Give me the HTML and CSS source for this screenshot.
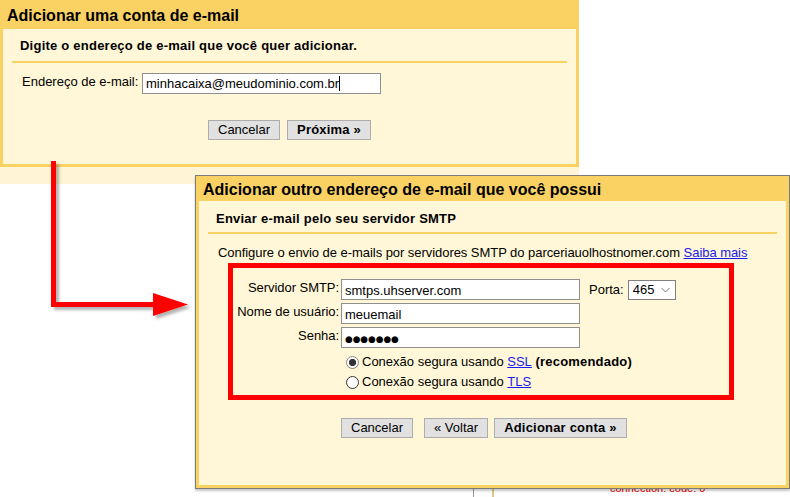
FILE: index.html
```html
<!DOCTYPE html>
<html lang="pt-BR">
<head>
<meta charset="utf-8">
<title>Adicionar conta de e-mail</title>
<link rel="stylesheet" href="styles.css">
</head>
<body>
<div class="desk">
  <div class="bg-bits">
    <span class="bg-line"></span>
    <span class="bg-err">connection: code: 0</span>
  </div>

  <section class="win win1">
    <h1 class="win-title">Adicionar uma conta de e-mail</h1>
    <div class="win-body">
      <h2 class="sub">Digite o endereço de e-mail que você quer adicionar.</h2>
      <div class="row1">
        <span class="lbl1">Endereço de e-mail:</span>
        <div class="field f1">minhacaixa@meudominio.com.br<span class="caret"></span></div>
      </div>
      <div class="btns btns1">
        <button class="btn" type="button">Cancelar</button>
        <button class="btn b" type="button">Próxima »</button>
      </div>
    </div>
    <div class="win1-strip"></div>
  </section>

  <section class="win win2">
    <h1 class="win-title">Adicionar outro endereço de e-mail que você possui</h1>
    <div class="win-body">
      <h2 class="sub">Enviar e-mail pelo seu servidor SMTP</h2>
      <p class="intro">Configure o envio de e-mails por servidores SMTP do parceriauolhostnomer.com <a href="#" class="lnk">Saiba mais</a></p>
      <div class="redbox">
        <div class="form">
          <label class="lbl" for="smtp">Servidor SMTP:</label>
          <input id="smtp" class="field f2" type="text" value="smtps.uhserver.com">
          <div class="porta">
            <span class="porta-lbl">Porta:</span>
            <span class="select">465<svg class="chev" width="9" height="6" viewBox="0 0 9 6"><polyline points="0.5,1 4.5,5 8.5,1" fill="none" stroke="#7a7a7a" stroke-width="1"/></svg></span>
          </div>

          <label class="lbl" for="user">Nome de usuário:</label>
          <input id="user" class="field f2" type="text" value="meuemail">
          <span></span>

          <label class="lbl" for="pass">Senha:</label>
          <input id="pass" class="field f2 pw" type="text" value="●●●●●●●" readonly>
          <span></span>

          <div class="radios">
            <label class="rrow"><input class="radio" type="radio" name="sec" checked>Conexão segura usando&nbsp;<a href="#" class="lnk">SSL</a>&nbsp;<b class="bb">(recomendado)</b></label>
            <label class="rrow"><input class="radio" type="radio" name="sec">Conexão segura usando&nbsp;<a href="#" class="lnk">TLS</a></label>
          </div>
        </div>
      </div>
      <div class="btns btns2">
        <button class="btn g11" type="button">Cancelar</button>
        <button class="btn g6" type="button">« Voltar</button>
        <button class="btn b" type="button">Adicionar conta »</button>
      </div>
    </div>
  </section>

  <svg class="arrow" width="150" height="175" viewBox="0 0 150 175">
    <defs>
      <filter id="sh" x="-20%" y="-20%" width="140%" height="140%">
        <feDropShadow dx="3" dy="3" stdDeviation="1.5" flood-color="#000" flood-opacity="0.3"/>
      </filter>
    </defs>
    <g filter="url(#sh)" fill="#ff0000">
      <rect x="6" y="6" width="5" height="146"/>
      <rect x="6" y="147" width="104" height="5"/>
      <polygon points="108,138 108,161 143,149.5"/>
    </g>
  </svg>
</div>
</body>
</html>
```

FILE: styles.css
```css
* { box-sizing: border-box; }
html, body { margin: 0; padding: 0; background: #fff; }
body {
  font-family: "Liberation Sans", Arial, sans-serif;
  font-size: 13px;
  color: #000;
}
.desk { position: relative; width: 790px; height: 497px; overflow: hidden; }

/* background page remnants */
.bg-bits { position: absolute; inset: 0; z-index: 1; }
.bg-line {
  position: absolute; left: 473px; top: 486px; width: 21px; height: 11px;
  border-left: 1px solid #9a9a9a; border-right: 2px solid #e2c87c;
}
.bg-err {
  position: absolute; left: 610px; top: 482px;
  font-size: 11px; line-height: 13px; color: #e00000;
}

.win { position: absolute; }
.win1 { left: 0; top: 0; width: 579px; z-index: 2; }
.win2 {
  left: 195px; top: 175px; width: 595px; height: 314px; z-index: 3;
  border: 1px solid #7b7b7b;
  box-shadow: 0 2px 2px rgba(0, 0, 0, 0.22);
  display: flex; flex-direction: column;
}

.win-title {
  margin: 0; background: #fad163;
  font-size: 16px; font-weight: bold; padding-left: 7px; white-space: nowrap;
}
.win1 .win-title { height: 29px; padding-top: 2px; line-height: 27px; }
.win2 .win-title { height: 25px; padding-top: 3px; line-height: 22px; }

.win-body { background: #fff7d7; border: 3px solid #fad163; border-top: 0; }
.win1 .win-body { height: 138px; }
.win2 .win-body { flex: 1; }

.win1-strip { height: 17px; background: #fff5d6; }

.sub {
  margin: 0 9px; font-size: 13px; font-weight: bold; line-height: 17px;
  padding-left: 8px; border-bottom: 2px solid #fad163; letter-spacing: 0.23px;
  white-space: nowrap;
}
.win1 .sub { padding-top: 8px; padding-bottom: 7px; }
.win2 .sub { padding-top: 9px; padding-bottom: 5px; }

.row1 { display: flex; align-items: flex-start; margin-top: 10px; padding-left: 19px; }
.lbl1 { width: 120px; line-height: 17px; }

.field {
  height: 21px; border: 1px solid #8f8f8f; background: #fff;
  font-family: "Liberation Sans", Arial, sans-serif;
  font-size: 13px; line-height: 18px; padding: 1px 3px 0; color: #000;
  margin: 0; outline: none;
}
.f1 { width: 239px; white-space: nowrap; }
.caret { display: inline-block; width: 1px; height: 15px; background: #000; vertical-align: -3px; }
.f2 { width: 239px; }
.pw {
  font-family: "DejaVu Sans", sans-serif; font-size: 8.8px;
  padding-top: 3px; line-height: 16px;
}

.btns { display: flex; }
.btns1 { justify-content: center; margin-top: 26px; gap: 7px; }
.btns2 { margin-top: 18px; padding-left: 142px; }
.btn {
  height: 20px; padding: 0 9px; margin: 0;
  border: 1px solid #adadad; background: #e1e1e1;
  font-family: "Liberation Sans", Arial, sans-serif;
  font-size: 13px; line-height: 18px; color: #000; white-space: nowrap;
}
.btn.b { font-weight: bold; letter-spacing: 0.2px; }
.g11 { margin-right: 11px; }
.g6 { margin-right: 6px; }

.intro { margin: 10px 0 0 19px; line-height: 17px; white-space: nowrap; letter-spacing: -0.05px; }
.lnk { color: #1a1aee; text-decoration: underline; }
.bb { letter-spacing: 0.2px; }

.redbox {
  margin: 2px 0 0 29px; width: 506px; height: 137px;
  border: 5px solid #ff0000; padding-top: 11px;
}
.form {
  display: grid; grid-template-columns: 106px 239px auto;
  column-gap: 2px; row-gap: 3px; align-items: start;
}
.lbl { text-align: right; line-height: 17px; white-space: nowrap; letter-spacing: -0.05px; }
.porta { display: flex; align-items: flex-start; margin-left: 7px; }
.porta-lbl { line-height: 17px; padding-top: 2px; margin-right: 4px; }
.select {
  display: flex; align-items: center; width: 48px; height: 20px; margin-top: 1px;
  border: 1px solid #7f7f7f; background: #fff; line-height: 18px; padding-left: 4px;
}
.chev { margin-left: auto; margin-right: 5px; }

.radios { grid-column: 2 / 4; margin-top: 1px; }
.rrow { display: flex; align-items: center; height: 20px; line-height: 20px; white-space: nowrap; }
.radio {
  appearance: none; -webkit-appearance: none;
  width: 13px; height: 13px; margin: 0 3px 0 5px; flex: none;
  border: 1px solid #333; border-radius: 50%; background: #fff;
}
.radio:checked {
  border-color: #858585;
  background: radial-gradient(circle, #333 0 3.3px, #fff 3.9px);
}

.arrow { position: absolute; left: 45px; top: 155px; z-index: 4; }
```
